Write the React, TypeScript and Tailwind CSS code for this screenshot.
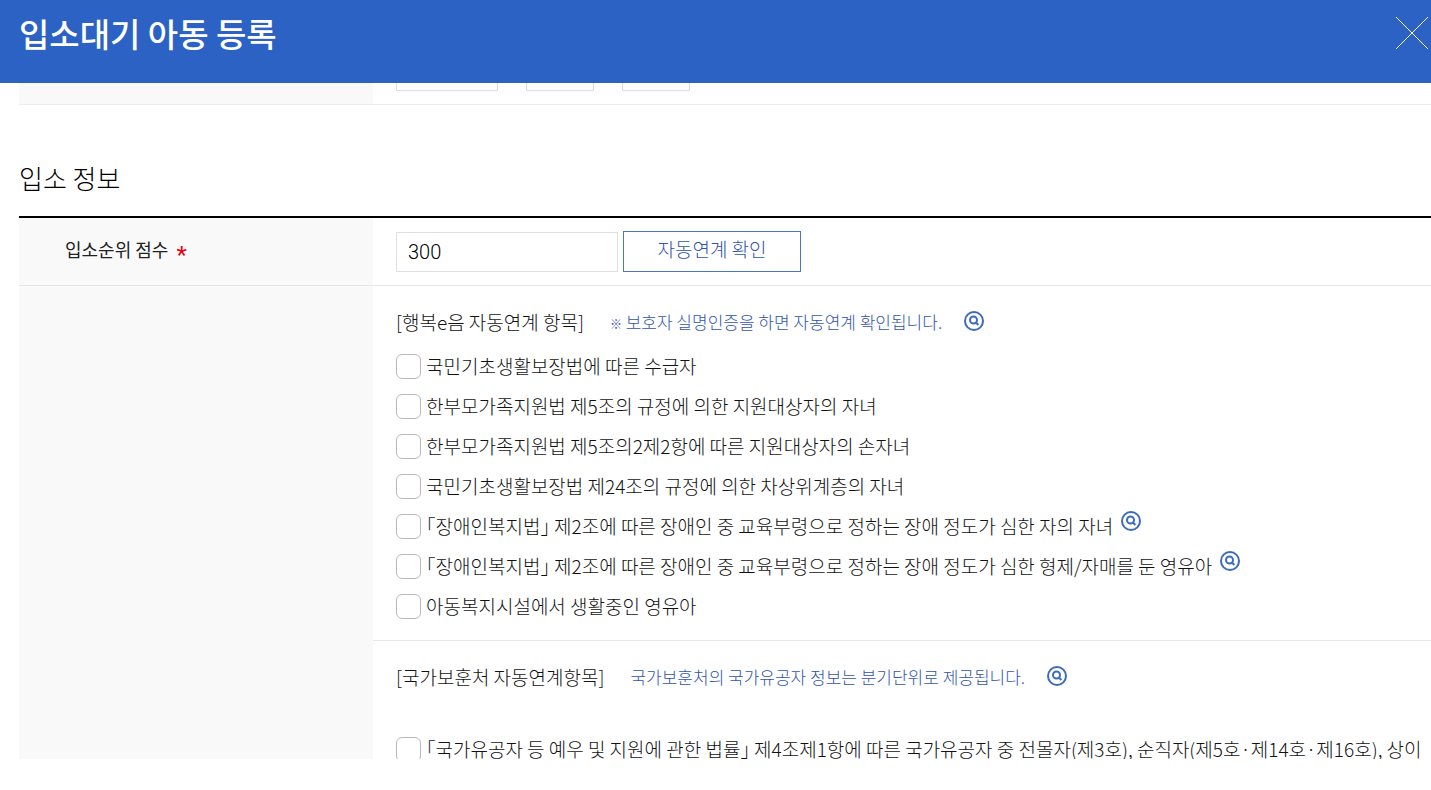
import type { ReactNode } from "react";

const welfareItems = [
  { id: "basic", label: "국민기초생활보장법에 따른 수급자" },
  { id: "single-parent", label: "한부모가족지원법 제5조의 규정에 의한 지원대상자의 자녀" },
  { id: "grandchild", label: "한부모가족지원법 제5조의2제2항에 따른 지원대상자의 손자녀" },
  { id: "near-poor", label: "국민기초생활보장법 제24조의 규정에 의한 차상위계층의 자녀" },
  {
    id: "disabled-parent",
    label: "「장애인복지법」 제2조에 따른 장애인 중 교육부령으로 정하는 장애 정도가 심한 자의 자녀",
    help: true
  },
  {
    id: "disabled-sibling",
    label: "「장애인복지법」 제2조에 따른 장애인 중 교육부령으로 정하는 장애 정도가 심한 형제/자매를 둔 영유아",
    help: true
  },
  { id: "child-facility", label: "아동복지시설에서 생활중인 영유아" }
];

const veteranItems = [
  {
    id: "veteran",
    label: "「국가유공자 등 예우 및 지원에 관한 법률」 제4조제1항에 따른 국가유공자 중 전몰자(제3호), 순직자(제5호·제14호·제16호), 상이"
  }
];

function HelpButton() {
  return (
    <button type="button" aria-label="도움말 보기" className="shrink-0 text-[#3e6bbd]">
      <svg width="20" height="20" viewBox="0 0 20 20" fill="none" stroke="currentColor" strokeWidth="2">
        <circle cx="10" cy="10" r="9" />
        <circle cx="9.5" cy="9" r="3.5" />
        <path d="M11.4 11l3 3" />
      </svg>
    </button>
  );
}

function CheckItem({ id, label, help }: { id: string; label: string; help?: boolean }) {
  return (
    <li className="flex h-10 items-center">
      <input
        id={id}
        type="checkbox"
        className="size-[25px] shrink-0 appearance-none rounded-md border border-[#b9b9b9] bg-white checked:bg-[#2b62c4]"
      />
      <label htmlFor={id} className="ml-[5px] whitespace-nowrap">
        {label}
      </label>
      {help && (
        <span className="mb-2.5 ml-2 flex">
          <HelpButton />
        </span>
      )}
    </li>
  );
}

function GroupHeading({ title, note }: { title: string; note: ReactNode }) {
  return (
    <div className="flex h-8 items-center whitespace-nowrap">
      <h3>{title}</h3>
      <p className="ml-[26px] text-[17px] text-[#2f54ad]">{note}</p>
      <span className="mb-0.5 ml-[22px] flex">
        <HelpButton />
      </span>
    </div>
  );
}

export default function App() {
  return (
    <div className="flex h-screen flex-col overflow-hidden bg-white pb-[31px] font-['Noto_Sans_CJK_KR',sans-serif] text-[19px] leading-7 font-light text-[#111] [font-feature-settings:'halt']">
      <header className="flex h-[83px] shrink-0 items-start justify-between bg-[#2b62c4] pr-[2px] pl-[19px] text-white">
        <h1 className="pt-[7px] text-[33px] leading-[52px] font-medium">입소대기 아동 등록</h1>
        <button type="button" aria-label="닫기" className="mt-4">
          <svg width="34" height="34" viewBox="0 0 34 34" stroke="currentColor">
            <path d="M1 1l32 32M33 1L1 33" />
          </svg>
        </button>
      </header>

      <main className="min-h-0 flex-1 overflow-hidden pl-[19px]">
        <div className="flex h-[22px] overflow-hidden border-b border-[#ececec]">
          <div className="w-[354px] shrink-0 bg-[#f9f9f9]" />
          <div className="flex items-end pb-[13px] pl-[23px]">
            <input aria-label="연도" className="mr-7 h-10 w-[102px] border border-[#dedede]" />
            <input aria-label="월" className="mr-7 h-10 w-[68px] border border-[#dedede]" />
            <input aria-label="일" className="h-10 w-[68px] border border-[#dedede]" />
          </div>
        </div>

        <h2 className="mt-[55px] text-[26px] leading-9 font-light text-black">입소 정보</h2>

        <section className="mt-5 border-t-2 border-black">
          <div className="flex border-b border-[#e6e6e6]">
            <label
              htmlFor="score"
              className="flex w-[354px] shrink-0 items-start gap-2 bg-[#f9f9f9] pt-[17px] pl-[46px] text-lg leading-7 font-normal text-[#222]"
            >
              입소순위 점수
              <span className="pt-1.5 font-[Roboto,sans-serif] text-2xl leading-7 text-[#e60012]">*</span>
            </label>
            <div className="flex items-center gap-[5px] pt-3 pb-[13px] pl-[23px]">
              <input
                id="score"
                defaultValue="300"
                className="mt-0.5 h-10 w-[222px] border border-[#e0e0e0] px-[11px] font-[Roboto,sans-serif] text-xl text-black"
              />
              <button type="button" className="h-[41px] w-[178px] border border-[#4a76c4] pb-1 text-[#2f54ad]">
                자동연계 확인
              </button>
            </div>
          </div>

          <div className="flex">
            <div className="w-[354px] shrink-0 bg-[#f9f9f9]" />
            <div className="min-w-0 flex-1">
              <div className="border-b border-[#e6e6e6] px-[23px] pt-5 pb-[14px]">
                <GroupHeading
                  title="[행복e음 자동연계 항목]"
                  note={
                    <>
                      <span className="text-xs">※</span> 보호자 실명인증을 하면 자동연계 확인됩니다.
                    </>
                  }
                />
                <ul className="mt-2">
                  {welfareItems.map((item) => (
                    <CheckItem key={item.id} {...item} />
                  ))}
                </ul>
              </div>
              <div className="px-[23px] pt-5">
                <GroupHeading title="[국가보훈처 자동연계항목]" note="국가보훈처의 국가유공자 정보는 분기단위로 제공됩니다." />
                <ul className="mt-9">
                  {veteranItems.map((item) => (
                    <CheckItem key={item.id} {...item} />
                  ))}
                </ul>
              </div>
            </div>
          </div>
        </section>
      </main>
    </div>
  );
}
